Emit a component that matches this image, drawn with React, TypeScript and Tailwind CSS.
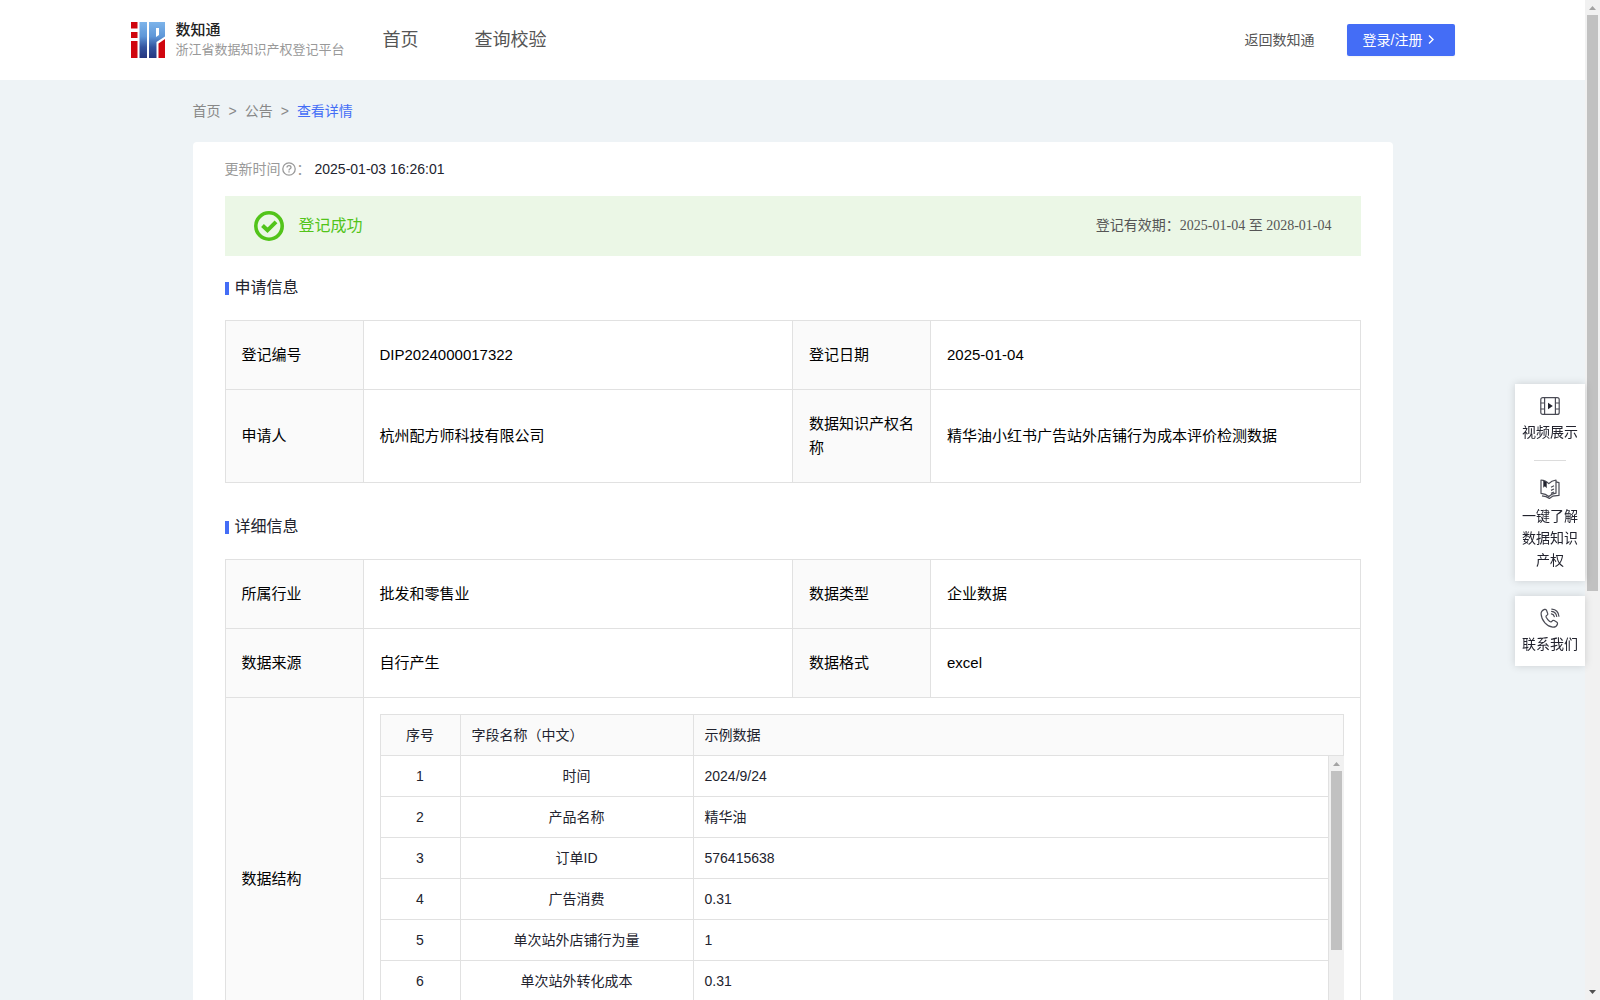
import type { ReactNode } from "react";

const fields = [
  { name: "时间", sample: "2024/9/24" },
  { name: "产品名称", sample: "精华油" },
  { name: "订单ID", sample: "576415638" },
  { name: "广告消费", sample: "0.31" },
  { name: "单次站外店铺行为量", sample: "1" },
  { name: "单次站外转化成本", sample: "0.31" },
];

const Logo = () => (
  <svg className="h-9 w-[34px]" viewBox="0 0 34 36" aria-hidden="true">
    <defs>
      <linearGradient id="logoBlue" gradientUnits="userSpaceOnUse" x1="0" y1="0" x2="0" y2="36">
        <stop offset="0" stopColor="#7db4ea" />
        <stop offset="0.4" stopColor="#5f97d8" />
        <stop offset="0.7" stopColor="#33549f" />
        <stop offset="1" stopColor="#25367f" />
      </linearGradient>
    </defs>
    <path d="M0 0h6.500v6.500H0zM0 10h6.500v6H0zM0 19h6.500v17H0z" fill="#d0060f" />
    <path d="M8.500 0H16v36H8.500z" fill="url(#logoBlue)" />
    <path
      d="M18 0H34v14.500L25.500 20v16H18zM25 6v9l3-2V6z"
      fill="url(#logoBlue)"
      fillRule="evenodd"
    />
    <path d="M27.500 21.500 34 17v19h-6.500z" fill="#d0060f" />
  </svg>
);

const VideoIcon = () => (
  <svg
    className="h-5 w-5"
    viewBox="0 0 20 20"
    fill="none"
    stroke="#4a4b55"
    strokeWidth="1.2"
    aria-hidden="true"
  >
    <rect x="0.8" y="1.600" width="18.400" height="16.800" rx="2" />
    <path d="M4.600 1.600v16.800M15.400 1.600v16.800M0.800 7h3.800M0.800 13h3.800M15.400 7h3.800M15.400 13h3.800" />
    <path d="M8 6.800v6.400l4.800-3.200z" fill="#22232e" stroke="none" />
  </svg>
);

const BookIcon = () => (
  <svg
    className="h-5 w-5"
    viewBox="0 0 20 20"
    fill="none"
    stroke="#4a4b55"
    strokeWidth="1.2"
    strokeLinejoin="round"
    aria-hidden="true"
  >
    <path d="M1 1c3 .2 5.600 1.300 7.800 3.600C10.600 2.600 13 1.400 16 1v13.200c-2.800.3-5 1.300-7.200 3.300C6.600 15.500 4 14.600 1 14.300z" />
    <path d="M16 2.800l3 .8v12.800l-6.400.8-3.200 2.200-3.400-1.800-4-.8" />
    <path d="M11 8.200l3-1.400M11 11.400l3-1.400M11 14.400l3-1.400" />
    <path d="M3.300 1.500v7.300l1.600-1.500 1.800 1.900V2.900z" fill="#22232e" stroke="none" />
  </svg>
);

const PhoneIcon = () => (
  <svg
    className="h-5 w-5"
    viewBox="0 0 20 20"
    fill="none"
    stroke="#4a4b55"
    strokeWidth="1.2"
    strokeLinecap="round"
    strokeLinejoin="round"
    aria-hidden="true"
  >
    <path d="M4.600 1.400c-2 .7-3.600 2.300-3.500 4.600.3 6.500 6 12.700 11.600 13.200 2.400.2 4-1 4.700-3 .3-.9 0-1.600-.8-2.100l-2.400-1.500c-.8-.5-1.700-.3-2.200.5-.6.900-1.400 1-2.300.3-1.500-1.100-2.700-2.600-3.500-4.200-.4-.9-.1-1.500.7-1.900.9-.5 1.100-1.200.7-2.100L6.500 2.300c-.4-.8-1.100-1.100-1.900-.9z" />
    <path d="M11.400 5.800c1.700.3 2.600 1.200 2.900 2.900M11.600 3.400c3 .4 4.700 2.100 5.100 5.100M11.800 1.100c4.200.4 6.700 2.900 7.100 7.100" />
  </svg>
);

const SectionTitle = ({ children }: { children: ReactNode }) => (
  <h2 className="flex items-center gap-[6px] text-base leading-6 text-[#22232e]">
    <span className="mt-px h-[13px] w-1 bg-[#446df6]" />
    {children}
  </h2>
);

const Label = ({ children }: { children: ReactNode }) => (
  <th
    scope="row"
    className="border border-[#e1e1e1] bg-[#fafafa] px-4 py-[22px] text-left font-normal"
  >
    {children}
  </th>
);

const Value = ({ children }: { children: ReactNode }) => (
  <td className="border border-[#e1e1e1] px-4 py-[22px]">{children}</td>
);

const Columns = () => (
  <colgroup>
    <col className="w-[138px]" />
    <col />
    <col className="w-[138px]" />
    <col />
  </colgroup>
);

const FieldColumns = () => (
  <colgroup>
    <col className="w-20" />
    <col className="w-[233px]" />
    <col />
  </colgroup>
);

const ScrollBar = ({ thumb }: { thumb: string }) => (
  <div className="flex w-[15px] shrink-0 flex-col items-center bg-[#f1f1f1]" aria-hidden="true">
    <svg className="h-[15px] w-[15px] shrink-0" viewBox="0 0 15 15">
      <path d="M4 10h7L7.500 6z" fill="#a3a3a3" />
    </svg>
    <div className={`w-[11px] shrink-0 bg-[#c1c1c1] ${thumb}`} />
    <svg className="mt-auto h-[15px] w-[15px] shrink-0" viewBox="0 0 15 15">
      <path d="M4 5h7L7.500 9z" fill="#505050" />
    </svg>
  </div>
);

const App = () => {
  return (
    <div className="flex h-screen bg-[#eef3f6] font-['Liberation_Sans','Noto_Sans_CJK_SC',sans-serif] text-sm text-[#22232e]">
      <div className="h-full min-w-0 flex-1 overflow-hidden">
        <header className="bg-white">
          <div className="mx-auto flex h-20 max-w-[1324px] items-center">
            <a href="#" className="flex items-center gap-[11px]">
              <Logo />
              <span className="flex flex-col">
                <span className="text-[15px] leading-5 font-medium text-[#222]">数知通</span>
                <span className="text-[13px] leading-5 text-[#999]">浙江省数据知识产权登记平台</span>
              </span>
            </a>
            <nav className="ml-[38px] flex gap-14 text-lg text-[#555]">
              <a href="#">首页</a>
              <a href="#">查询校验</a>
            </nav>
            <a href="#" className="ml-auto text-[#555]">
              返回数知通
            </a>
            <button
              type="button"
              className="ml-8 flex h-8 w-[108px] items-center gap-[3px] rounded-xs bg-[#446df6] pl-4 text-white shadow-xs"
            >
              登录/注册
              <svg
                className="h-3 w-3"
                viewBox="0 0 12 12"
                fill="none"
                stroke="currentColor"
                strokeWidth="1.4"
                aria-hidden="true"
              >
                <path d="M4 1.500 8 5.500l-4 4" />
              </svg>
            </button>
          </div>
        </header>

        <main className="mx-auto max-w-[1200px]">
          <nav className="flex h-[62px] items-center gap-2 text-[#888]">
            <a href="#">首页</a>
            <span>&gt;</span>
            <a href="#">公告</a>
            <span>&gt;</span>
            <a href="#" className="text-[#446df6]">
              查看详情
            </a>
          </nav>

          <div className="rounded-sm bg-white px-8 pb-8">
            <div className="flex h-[54px] items-center">
              <span className="flex items-center text-[#999]">
                更新时间
                <svg
                  className="mx-px h-3.5 w-3.5"
                  viewBox="0 0 14 14"
                  fill="none"
                  stroke="currentColor"
                  strokeWidth="1.3"
                  aria-hidden="true"
                >
                  <circle cx="7" cy="7" r="6.200" />
                  <path d="M5 5.600C5 4.300 5.900 3.600 7 3.600s2 .7 2 1.800C9 6.800 7 6.800 7 8.400M7 9.300v1.300" />
                </svg>
                ：
              </span>
              <span className="ml-1">2025-01-03 16:26:01</span>
            </div>

            <div className="flex h-[60px] items-center bg-[#ebf7e6] pr-[29px] pl-7">
              <svg
                className="h-8 w-8"
                viewBox="0 0 32 32"
                fill="none"
                stroke="#52c41a"
                aria-hidden="true"
              >
                <circle cx="16" cy="16" r="13.200" strokeWidth="3.600" />
                <path d="M9.500 15.500l5 4.800 8.500-8.500" strokeWidth="4" />
              </svg>
              <span className="ml-[14px] text-base text-[#52c41a]">登记成功</span>
              <span className="ml-auto font-['Liberation_Serif','Noto_Sans_CJK_SC',serif] text-[#555]">
                登记有效期：2025-01-04 至 2028-01-04
              </span>
            </div>

            <div className="pt-5 pb-5">
              <SectionTitle>申请信息</SectionTitle>
            </div>
            <table className="w-full table-fixed border-collapse text-[15px] leading-6 text-black">
              <Columns />
              <tbody>
                <tr>
                  <Label>登记编号</Label>
                  <Value>DIP2024000017322</Value>
                  <Label>登记日期</Label>
                  <Value>2025-01-04</Value>
                </tr>
                <tr>
                  <Label>申请人</Label>
                  <Value>杭州配方师科技有限公司</Value>
                  <Label>数据知识产权名称</Label>
                  <Value>精华油小红书广告站外店铺行为成本评价检测数据</Value>
                </tr>
              </tbody>
            </table>

            <div className="pt-8 pb-5">
              <SectionTitle>详细信息</SectionTitle>
            </div>
            <table className="w-full table-fixed border-collapse text-[15px] leading-6 text-black">
              <Columns />
              <tbody>
                <tr>
                  <Label>所属行业</Label>
                  <Value>批发和零售业</Value>
                  <Label>数据类型</Label>
                  <Value>企业数据</Value>
                </tr>
                <tr>
                  <Label>数据来源</Label>
                  <Value>自行产生</Value>
                  <Label>数据格式</Label>
                  <Value>excel</Value>
                </tr>
                <tr>
                  <Label>数据结构</Label>
                  <td colSpan={3} className="border border-[#e1e1e1] p-4">
                    <table className="w-full table-fixed border-separate border-spacing-0 border-r border-[#e1e1e1] text-sm leading-6 text-[#22232e]">
                      <FieldColumns />
                      <thead>
                        <tr className="h-[42px] bg-[#fafafa] text-left">
                          <th className="border-y border-l border-[#e1e1e1] p-0 text-center font-normal">
                            序号
                          </th>
                          <th className="border-y border-l border-[#e1e1e1] px-[11px] font-normal">
                            字段名称（中文）
                          </th>
                          <th className="border-y border-l border-[#e1e1e1] px-[11px] font-normal">
                            示例数据
                          </th>
                        </tr>
                      </thead>
                    </table>
                    <div className="flex h-[287px] overflow-hidden">
                      <div className="min-w-0 flex-1">
                        <table className="w-full table-fixed border-separate border-spacing-0 border-r border-[#e1e1e1] text-sm leading-6 text-[#22232e]">
                          <FieldColumns />
                          <tbody>
                            {fields.map((item, index) => (
                              <tr key={item.name} className="h-[41px]">
                                <td className="border-b border-l border-[#e1e1e1] p-0 text-center">
                                  {index + 1}
                                </td>
                                <td className="border-b border-l border-[#e1e1e1] p-0 text-center">
                                  {item.name}
                                </td>
                                <td className="border-b border-l border-[#e1e1e1] px-[11px] py-0">
                                  {item.sample}
                                </td>
                              </tr>
                            ))}
                          </tbody>
                        </table>
                      </div>
                      <ScrollBar thumb="h-[179px]" />
                    </div>
                  </td>
                </tr>
              </tbody>
            </table>
          </div>
        </main>
      </div>

      <aside className="fixed top-96 right-[15px] flex w-[70px] flex-col gap-[15px] text-center leading-[22px]">
        <div className="bg-white px-[7px] pt-3 pb-[10px] shadow-[0_0_8px_rgba(0,0,0,0.15)]">
          <a href="#" className="flex flex-col items-center gap-[5px]">
            <VideoIcon />
            视频展示
          </a>
          <div className="mx-auto mt-[17px] mb-[18px] h-px w-8 bg-[#dcdcdc]" />
          <a href="#" className="flex flex-col items-center gap-[6px]">
            <BookIcon />
            一键了解数据知识产权
          </a>
        </div>
        <div className="bg-white px-[7px] pt-3 pb-[11px] shadow-[0_0_8px_rgba(0,0,0,0.15)]">
          <a href="#" className="flex flex-col items-center gap-[5px]">
            <PhoneIcon />
            联系我们
          </a>
        </div>
      </aside>

      <ScrollBar thumb="h-[576px]" />
    </div>
  );
};

export default App;
